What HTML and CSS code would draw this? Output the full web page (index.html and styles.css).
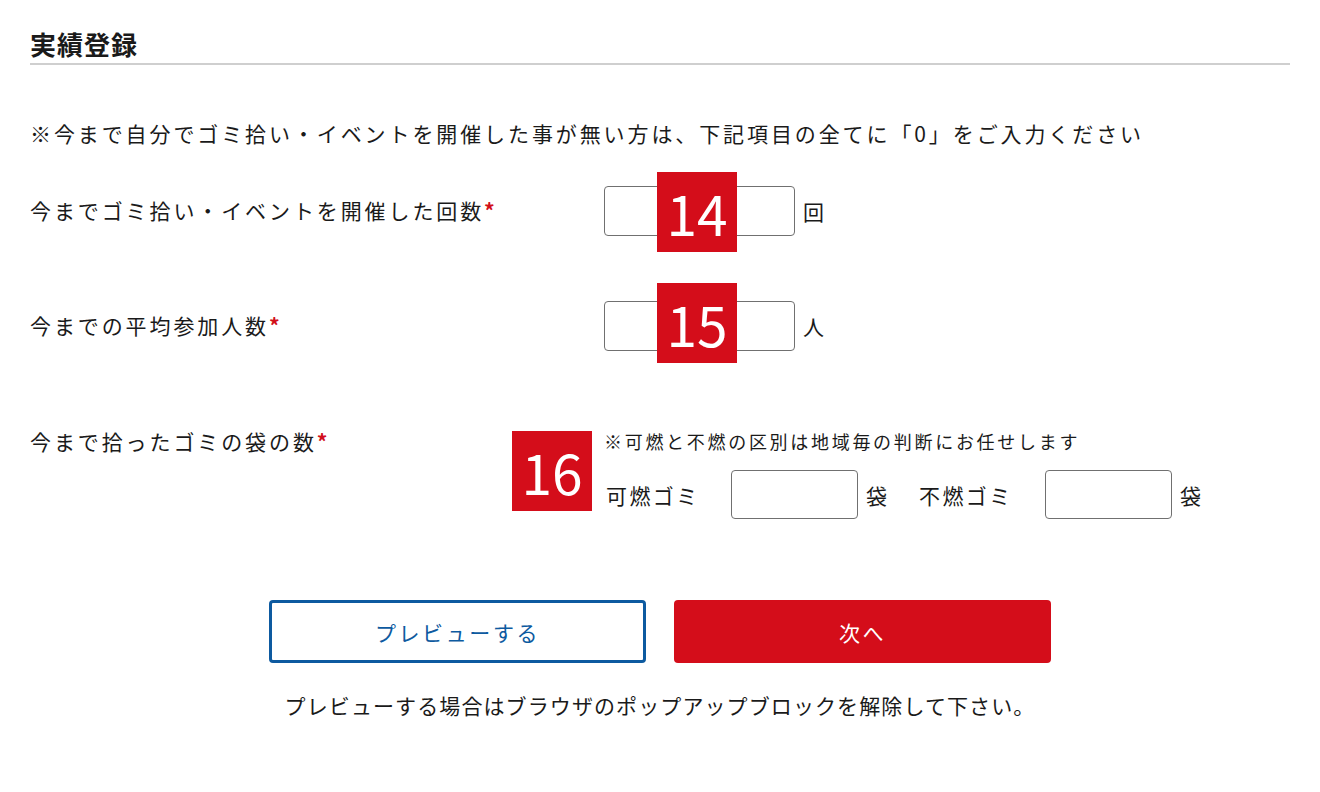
FILE: index.html
```html
<!DOCTYPE html>
<html lang="ja">
<head>
<meta charset="utf-8">
<title>実績登録</title>
<link rel="stylesheet" href="styles.css">
</head>
<body>
<div class="page">
  <h2 class="heading">実績登録</h2>
  <p class="notice">※今まで自分でゴミ拾い・イベントを開催した事が無い方は、下記項目の全てに「0」をご入力ください</p>

  <div class="row row-1">
    <div class="label">今までゴミ拾い・イベントを開催した回数<span class="req">*</span></div>
    <div class="field">
      <input class="box" type="text">
      <span class="unit">回</span>
      <span class="badge badge-a">14</span>
    </div>
  </div>

  <div class="row row-2">
    <div class="label">今までの平均参加人数<span class="req">*</span></div>
    <div class="field">
      <input class="box" type="text">
      <span class="unit">人</span>
      <span class="badge badge-a badge-15">15</span>
    </div>
  </div>

  <div class="row row-3">
    <div class="label">今まで拾ったゴミの袋の数<span class="req">*</span></div>
    <div class="field field-col">
      <div class="subnote">※可燃と不燃の区別は地域毎の判断にお任せします</div>
      <div class="bags">
        <span class="bag-label">可燃ゴミ</span>
        <input class="box box-sm" type="text">
        <span class="unit">袋</span>
        <span class="bag-label bag-label-2">不燃ゴミ</span>
        <input class="box box-sm" type="text">
        <span class="unit">袋</span>
      </div>
      <span class="badge badge-b">16</span>
    </div>
  </div>

  <div class="actions">
    <button class="btn btn-preview" type="button">プレビューする</button>
    <button class="btn btn-next" type="button">次へ</button>
  </div>
  <p class="footnote">プレビューする場合はブラウザのポップアップブロックを解除して下さい。</p>
</div>
</body>
</html>
```

FILE: styles.css
```css
* { box-sizing: border-box; }
html, body { margin: 0; padding: 0; background: #fff; }
body {
  font-family: "Noto Sans CJK JP", "Noto Sans", sans-serif;
  color: #1a1a1a;
  font-size: 21px;
  letter-spacing: 2.9px;
}
.page {
  width: 1260px;
  margin-left: 30px;
  padding-top: 26px;
}
.heading {
  margin: 0;
  font-size: 26px;
  line-height: 36px;
  font-weight: 700;
  letter-spacing: 1px;
  padding-bottom: 1px;
  border-bottom: 2px solid #cfcfcf;
}
.notice {
  margin: 53px 0 0;
  line-height: 30px;
}
.row {
  display: grid;
  grid-template-columns: 574px 1fr;
  align-items: center;
}
.row-1 { margin-top: 38px; }
.row-2 { margin-top: 65px; }
.row-3 { margin-top: 76px; align-items: start; }
.label { line-height: 28px; padding-bottom: 2px; }
.row-3 .label { padding-bottom: 0; }
.req { color: #d20f1b; font-weight: 700; letter-spacing: 0; }
.field {
  position: relative;
  display: flex;
  align-items: center;
}
.field-col {
  flex-direction: column;
  align-items: flex-start;
}
.box {
  width: 191px;
  height: 50px;
  border: 1px solid #707070;
  border-radius: 4px;
  background: #fff;
  margin: 0;
  padding: 0 8px;
  font: inherit;
}
.box-sm { width: 127px; height: 49px; }
.unit { margin-left: 8px; line-height: 28px; letter-spacing: 0; }
.badge {
  position: absolute;
  width: 80px;
  height: 80px;
  background: #d40d1a;
  color: #fff;
  font-family: "Noto Sans CJK JP", "Noto Sans", sans-serif;
  font-weight: 400;
  font-size: 55px;
  line-height: 80px;
  text-align: center;
  letter-spacing: 0;
}
.badge-a { left: 53px; top: -14px; }
.badge-15 { top: -18px; }
.badge-b { left: -92px; top: 4px; }
.subnote {
  font-size: 18px;
  line-height: 28px;
  letter-spacing: 2.7px;
}
.bags {
  margin-top: 15px;
  display: flex;
  align-items: center;
}
.bag-label {
  width: 127px;
  padding-left: 2px;
  line-height: 28px;
  letter-spacing: 2.4px;
}
.bag-label-2 { margin-left: 32px; width: 126px; padding-left: 0; }
.actions {
  margin-top: 81px;
  display: flex;
  justify-content: center;
  gap: 28px;
}
.btn {
  width: 377px;
  height: 63px;
  border-radius: 4px;
  font: inherit;
  letter-spacing: 2.6px;
  cursor: pointer;
  margin: 0;
}
.btn-preview {
  background: #fff;
  border: 3px solid #0d5aa0;
  color: #0d5aa0;
}
.btn-next {
  background: #d40d1a;
  border: 0;
  color: #fff;
}
.footnote {
  margin: 27px 0 0;
  line-height: 30px;
  text-align: center;
  letter-spacing: 1.1px;
}
```
